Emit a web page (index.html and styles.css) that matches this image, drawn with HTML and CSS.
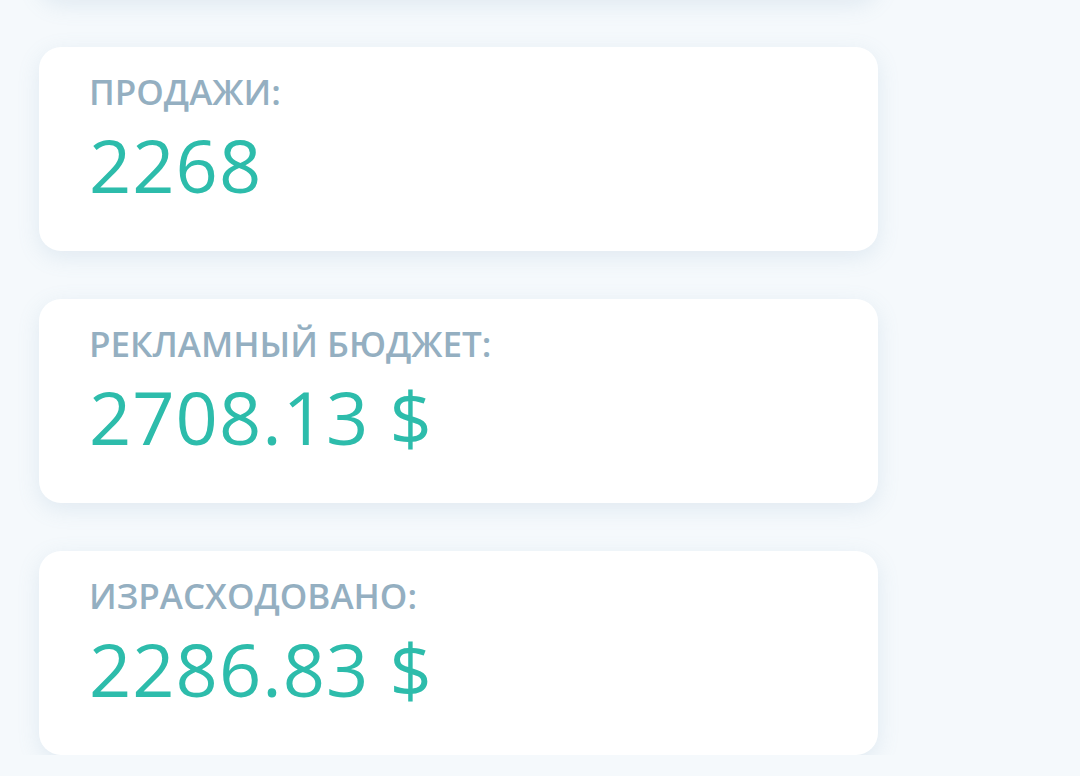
FILE: index.html
```html
<!DOCTYPE html>
<html>
    <head>
        <link rel="stylesheet" href="styles.css">
    </head>
    <body>
        <div id="stats">
            <div class="card"></div>
            <div class="card">
                <p class="label">ПРОДАЖИ:</p>
                <p class="value">2268</p>
            </div>
            <div class="card">
                <p class="label">РЕКЛАМНЫЙ БЮДЖЕТ:</p>
                <p class="value">2708.13 $</p>
            </div>
            <div class="card">
                <p class="label">ИЗРАСХОДОВАНО:</p>
                <p class="value">2286.83 $</p>
            </div>
        </div>
    </body>
</html>
```

FILE: styles.css
```css
* {
    font-family: "Open Sans", "DejaVu Sans", sans-serif;
}

body {
    background: #f5f9fc;
    margin: 0;
    overflow: hidden;
}

#stats {
    display: flex;
    flex-direction: column;
    gap: 48px;
    width: 839px;
    margin-top: -205px;
    padding-left: 39px;
}

.card {
    background: #ffffff;
    border-radius: 22px;
    height: 204px;
    box-sizing: border-box;
    padding: 24px 50px 0 50px;
    box-shadow: 0 6px 22px rgba(120, 155, 185, 0.16);
}

.label {
    margin: 0;
    color: #94afc1;
    font-size: 35px;
    font-weight: 600;
    line-height: 41px;
}

.value {
    margin: 0;
    color: #2dbcab;
    font-size: 74px;
    font-weight: 400;
    line-height: 106px;
    letter-spacing: 1px;
}
```
